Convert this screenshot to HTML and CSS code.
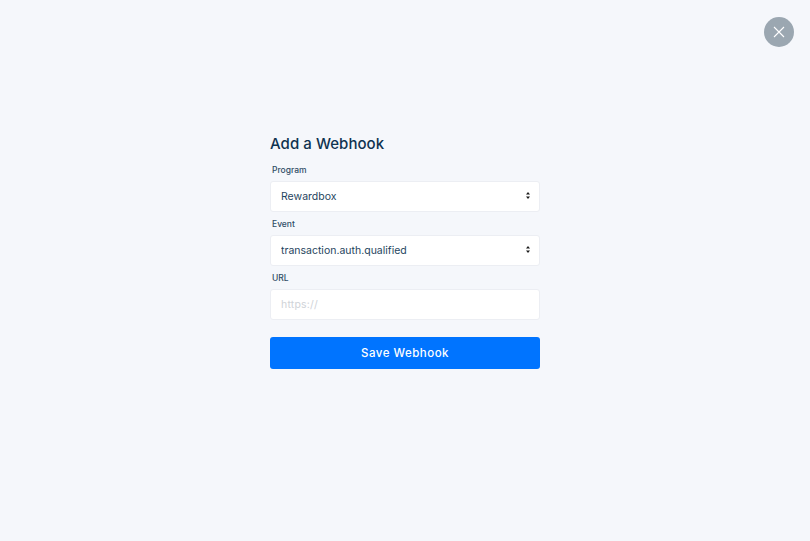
FILE: index.html
```html
<!DOCTYPE html>
<html lang="en">
<head>
  <meta charset="UTF-8" />
  <meta name="viewport" content="width=device-width, initial-scale=1.0" />
  <title>Add a Webhook</title>
  <link rel="stylesheet" href="styles.css">
</head>
<body>

  <button class="close-btn" aria-label="Close">
    <svg width="12" height="12" viewBox="0 0 12 12">
      <path d="M1 1L11 11M11 1L1 11" stroke="#fff" stroke-width="1.1" fill="none" />
    </svg>
  </button>

  <form class="webhook-form">
    <h1>Add a Webhook</h1>

    <label class="field-label" for="program">Program</label>
    <div class="select-wrap">
      <select id="program" class="field">
        <option>Rewardbox</option>
      </select>
      <svg class="select-arrows" width="4" height="7" viewBox="0 0 4 7">
        <path d="M2 0L4 2.6H0ZM2 7L0 4.4H4Z" fill="#1a1a1a" />
      </svg>
    </div>

    <label class="field-label" for="event">Event</label>
    <div class="select-wrap">
      <select id="event" class="field">
        <option>transaction.auth.qualified</option>
      </select>
      <svg class="select-arrows" width="4" height="7" viewBox="0 0 4 7">
        <path d="M2 0L4 2.6H0ZM2 7L0 4.4H4Z" fill="#1a1a1a" />
      </svg>
    </div>

    <label class="field-label" for="url">URL</label>
    <input id="url" class="field" type="text" placeholder="https://">

    <button type="button" class="save-btn">Save Webhook</button>
  </form>

</body>
</html>
```

FILE: styles.css
```css
* {
  box-sizing: border-box;
}

body {
  margin: 0;
  height: 541px;
  padding-top: 133px;
  display: flex;
  justify-content: center;
  align-items: flex-start;
  background-color: #f5f7fb;
  font-family: Inter, "Open Sans", sans-serif;
  color: #0f3350;
  overflow: hidden;
}

.close-btn {
  position: absolute;
  top: 17px;
  left: 764px;
  width: 30px;
  height: 30px;
  padding: 0;
  border: none;
  border-radius: 50%;
  background-color: #9ba7b1;
  display: flex;
  align-items: center;
  justify-content: center;
}

.webhook-form {
  width: 270px;
  display: flex;
  flex-direction: column;
}

.webhook-form h1 {
  margin: 0 0 10px;
  padding-top: 1px;
  font-size: 15px;
  line-height: 20px;
  font-weight: 500;
  letter-spacing: 0.05px;
  color: #0f3350;
}

.field-label {
  margin: 0 0 4px 2px;
  font-size: 8.5px;
  line-height: 13px;
  font-weight: 500;
  color: #2f4d66;
}

.select-wrap {
  position: relative;
}

.field {
  display: block;
  width: 100%;
  height: 31px;
  margin-bottom: 6px;
  padding: 0 10px;
  border: 1px solid #eceef3;
  border-radius: 3px;
  background-color: #fff;
  font-family: inherit;
  font-size: 10.5px;
  color: #1f4560;
  appearance: none;
  outline: none;
}

.field::placeholder {
  color: #cfd3d8;
  letter-spacing: 0.2px;
}

.select-arrows {
  position: absolute;
  top: 11px;
  right: 10px;
}

.save-btn {
  height: 32px;
  margin-top: 11px;
  border: none;
  border-radius: 3px;
  background-color: #0074ff;
  color: #fff;
  font-family: inherit;
  font-size: 11.5px;
  font-weight: 500;
  letter-spacing: 0.5px;
}
```
